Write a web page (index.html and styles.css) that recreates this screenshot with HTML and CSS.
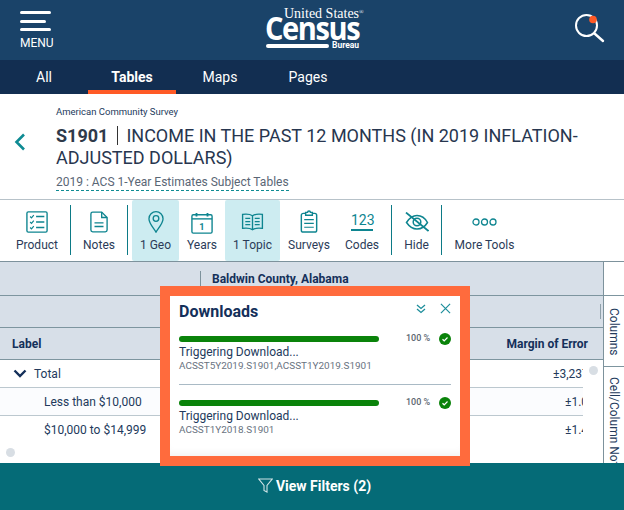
FILE: index.html
```html
<!DOCTYPE html>
<html lang="en">
<head>
<meta charset="utf-8">
<title>S1901 Income</title>
<link rel="stylesheet" href="styles.css">
</head>
<body>
<div class="page">
  <header class="topbar">
    <div class="menu">
      <span class="menu-lines"><i></i><i></i><i></i></span>
      <span class="menu-label">MENU</span>
    </div>
    <div class="logo">
      <span class="logo-us">United States<sup>®</sup></span>
      <span class="logo-census">Census</span>
      <span class="logo-foot"><i></i><b>Bureau</b></span>
    </div>
    <div class="search">
      <svg width="30" height="30" viewBox="0 0 30 30"><circle cx="11.500" cy="12.500" r="10.500" fill="none" stroke="#fff" stroke-width="2"/><path d="M19.500 20.500 L28 28" stroke="#fff" stroke-width="2.400" stroke-linecap="round"/><circle cx="18" cy="6.500" r="3.800" fill="#ff5a26"/></svg>
    </div>
  </header>
  <nav class="tabs">
    <a class="tab tab-all">All</a>
    <a class="tab tab-tables">Tables</a>
    <a class="tab tab-maps">Maps</a>
    <a class="tab tab-pages">Pages</a>
  </nav>
  <section class="title">
    <svg class="back" width="14" height="18" viewBox="0 0 14 18"><path d="M11 1.500 L3.500 9 L11 16.500" fill="none" stroke="#0e8b93" stroke-width="2.600"/></svg>
    <div class="title-text">
      <div class="survey">American Community Survey</div>
      <h1><b>S1901</b><span class="bar"></span>INCOME IN THE PAST 12 MONTHS (IN 2019 INFLATION-ADJUSTED DOLLARS)</h1>
      <span class="vintage">2019 : ACS 1-Year Estimates Subject Tables</span>
    </div>
  </section>
  <section class="tools">
    <div class="tool t-product">
      <svg width="22" height="22" viewBox="0 0 24 24" fill="none" stroke="#0e8590" stroke-width="1.500"><rect x="1" y="1" width="22" height="22" rx="1.500"/><path d="M4.500 6 l1.500 1.500 l2.500-3 M4.500 12 l1.500 1.500 l2.500-3 M4.500 18 l1.500 1.500 l2.500-3" stroke-width="1.300"/><path d="M11 6h9M11 12h9M11 18h9" stroke-width="1.500"/></svg>
      <span>Product</span>
    </div>
    <span class="sep"></span>
    <div class="tool t-notes">
      <svg width="18" height="22" viewBox="0 0 20 24" fill="none" stroke="#0e8590" stroke-width="1.500"><path d="M3 1h10l6 6v14a2 2 0 0 1-2 2H3a2 2 0 0 1-2-2V3a2 2 0 0 1 2-2z"/><path d="M13 1v6h6"/><path d="M5 13h10M5 17h10" stroke-width="1.500"/></svg>
      <span>Notes</span>
    </div>
    <span class="sep"></span>
    <div class="tool t-geo active">
      <svg width="16" height="22" viewBox="0 0 18 25" fill="none" stroke="#0e8590" stroke-width="1.500"><path d="M9 24 C6 19 1 14 1 8.800 a8 8 0 0 1 16 0 C17 14 12 19 9 24z"/><circle cx="9" cy="8.500" r="3.200"/></svg>
      <span>1 Geo</span>
    </div>
    <div class="tool t-years">
      <svg width="22" height="22" viewBox="0 0 24 24" fill="none" stroke="#0e8590" stroke-width="1.500"><rect x="1" y="3" width="22" height="20" rx="1.500"/><path d="M1 7.500h22" /><path d="M6 1v4M18 1v4" stroke-width="2"/><text x="12" y="19.500" text-anchor="middle" class="cal">1</text></svg>
      <span>Years</span>
    </div>
    <div class="tool t-topic active">
      <svg width="23" height="18" viewBox="0 0 24 20" fill="none" stroke="#0e8590" stroke-width="1.500"><path d="M12 3 C9 1 5 1 1 1.500 V17 C5 16.500 9 16.500 12 18.500 C15 16.500 19 16.500 23 17 V1.500 C19 1 15 1 12 3z"/><path d="M12 3v15.500"/><path d="M4 6h5.500M4 9.500h5.500M4 13h5.500M14.500 6H20M14.500 9.500H20M14.500 13H20" stroke-width="1.300"/></svg>
      <span>1 Topic</span>
    </div>
    <div class="tool t-surveys">
      <svg width="18" height="23" viewBox="0 0 18 24" fill="none" stroke="#0e8590" stroke-width="1.500"><path d="M5.500 3.500H3a2 2 0 0 0-2 2V21a2 2 0 0 0 2 2h12a2 2 0 0 0 2-2V5.500a2 2 0 0 0-2-2h-2.500"/><path d="M5.500 2.500h2a1.500 1.500 0 0 1 3 0h2v3h-7z"/><path d="M4 10h10M4 14h10M4 18h10" stroke-width="1.300"/></svg>
      <span>Surveys</span>
    </div>
    <div class="tool t-codes">
      <span class="codes-icon">123</span>
      <span>Codes</span>
    </div>
    <span class="sep"></span>
    <div class="tool t-hide">
      <svg width="24" height="20" viewBox="0 0 24 20" fill="none" stroke="#0e8590" stroke-width="1.500"><path d="M1.500 10.500 C5 5 9 3.500 12 3.500 C15 3.500 19.500 5 22.500 10.500 C19.500 15.500 15 17 12 17 C9 17 5 15.500 1.500 10.500z"/><circle cx="12" cy="10" r="3.800"/><path d="M1 .5 L23.500 19" stroke-width="1.700"/></svg>
      <span>Hide</span>
    </div>
    <span class="sep"></span>
    <div class="tool t-more">
      <svg width="25" height="8" viewBox="0 0 25 8" fill="none" stroke="#0e8590" stroke-width="1.300"><circle cx="4" cy="4" r="3"/><circle cx="12.500" cy="4" r="3"/><circle cx="21" cy="4" r="3"/></svg>
      <span>More Tools</span>
    </div>
  </section>
  <section class="table-wrap">
    <div class="table">
      <div class="row-head h1"><span class="county">Baldwin County, Alabama</span></div>
      <div class="row-head h2"><span class="h2-tick"></span></div>
      <div class="row-head h3"><span>Label</span><span class="moe">Margin of Error</span></div>
      <div class="row r-total"><span class="lab"><svg width="14" height="9" viewBox="0 0 14 9"><path d="M1.500 1.500 L7 7 L12.500 1.500" fill="none" stroke="#14305a" stroke-width="2.400"/></svg>Total</span><span class="val val-wide">±3,237</span></div>
      <div class="row r-alt"><span class="lab indent">Less than $10,000</span><span class="val">±1.0</span></div>
      <div class="row r-last"><span class="lab indent">$10,000 to $14,999</span><span class="val">±1.4</span></div>
      <span class="dot dot-l"></span>
      <span class="dot dot-r"></span>
    </div>
    <aside class="side">
      <div class="side-top"></div>
      <div class="side-tab st-cols"><span>Columns</span></div>
      <div class="side-tab st-notes"><span>Cell/Column Notes</span></div>
    </aside>
    <div class="modal">
      <div class="modal-inner">
        <div class="modal-head">
          <h2>Downloads</h2>
          <svg class="m-min" width="10" height="10" viewBox="0 0 10 10" fill="none" stroke="#1d8e9b" stroke-width="1.300"><path d="M1 1 L5 4.500 L9 1M1 5 L5 8.500 L9 5"/></svg>
          <svg class="m-close" width="11" height="11" viewBox="0 0 12 12" fill="none" stroke="#1d8e9b" stroke-width="1.300"><path d="M1 1 L11 11 M11 1 L1 11"/></svg>
        </div>
        <div class="dl">
          <div class="dl-top"><span class="progress"></span><span class="pct">100 %</span><svg class="ok" width="12" height="12" viewBox="0 0 12 12"><circle cx="6" cy="6" r="6" fill="#0a830a"/><path d="M3.500 6.200 L5.200 7.800 L8.500 4.500" fill="none" stroke="#fff" stroke-width="1.200"/></svg></div>
          <div class="dl-msg">Triggering Download...</div>
          <div class="dl-id">ACSST5Y2019.S1901,ACSST1Y2019.S1901</div>
        </div>
        <div class="dl dl-second">
          <div class="dl-top"><span class="progress"></span><span class="pct">100 %</span><svg class="ok" width="12" height="12" viewBox="0 0 12 12"><circle cx="6" cy="6" r="6" fill="#0a830a"/><path d="M3.500 6.200 L5.200 7.800 L8.500 4.500" fill="none" stroke="#fff" stroke-width="1.200"/></svg></div>
          <div class="dl-msg">Triggering Download...</div>
          <div class="dl-id">ACSST1Y2018.S1901</div>
        </div>
      </div>
    </div>
  </section>
  <footer class="filters">
    <svg width="15" height="15" viewBox="0 0 15 15" fill="none" stroke="#cfe3e6" stroke-width="1.100"><path d="M.8 1h13.400L9 7.500V14L6 12.500v-5z"/></svg>
    <span>View Filters (2)</span>
  </footer>
</div>
</body>
</html>
```
FILE: styles.css
```css
* { box-sizing: border-box; }
html, body { margin: 0; padding: 0; }
body { font-family: Roboto, "Liberation Sans", sans-serif; color: #14305a; background: #fff; }
.page { width: 624px; height: 510px; overflow: hidden; display: flex; flex-direction: column; }

.topbar { height: 60px; background: #1a4369; display: flex; position: relative; justify-content: center; flex: none; }
.menu { position: absolute; left: 20px; top: 11px; display: flex; flex-direction: column; color: #fff; }
.menu-lines { display: flex; flex-direction: column; gap: 5.500px; width: 31px; }
.menu-lines i { display: block; height: 3px; background: #fff; border-radius: 2px; }
.menu-lines i:nth-child(2) { width: 26px; }
.menu-label { font-size: 12px; margin-top: 5px; line-height: 14px; }
.logo { width: 100px; color: #fff; position: relative; height: 60px; }
.logo-us { position: absolute; left: 22px; top: 6px; font: 14px/15px "Liberation Serif", serif; white-space: nowrap; }
.logo-us sup { font-size: 6px; vertical-align: top; position: relative; top: -1px; }
.logo-census { position: absolute; left: 3px; top: 8px; font: bold 33px/40px "Open Sans", "Liberation Sans", sans-serif; letter-spacing: -1.600px; transform: scaleX(.88); transform-origin: left; }
.logo-foot { position: absolute; left: 4px; top: 41px; display: flex; align-items: center; gap: 3px; white-space: nowrap; }
.logo-foot i { display: block; width: 63px; height: 4px; background: #fff; border-radius: 2px; }
.logo-foot b { font: bold 8.500px/9px Roboto, sans-serif; }
.search { position: absolute; left: 575px; top: 13px; line-height: 0; }

.tabs { height: 34px; background: #122e51; display: flex; flex: none; color: #fff; font-size: 14px; }
.tab { display: flex; align-items: center; justify-content: center; height: 34px; padding-bottom: 1px; width: 88px; }
.tab-tables { font-weight: 700; border-bottom: 4px solid #ff5a26; padding-top: 3px; padding-bottom: 0; }

.title { height: 106px; flex: none; display: flex; border-bottom: 1px solid #b7c2c9; position: relative; }
.back { position: absolute; left: 13px; top: 39px; }
.title-text { padding: 11px 20px 0 56px; }
.survey { font-size: 9.500px; line-height: 14px; color: #233a5c; }
h1 { margin: 6px 0 0; font-size: 18px; line-height: 22px; font-weight: 400; color: #27364f; }
h1 b { font-weight: 700; color: #2f3a4a; }
.bar { display: inline-block; width: 1px; height: 19px; background: #333; margin: 0 8px 0 9px; vertical-align: -3px; }
.vintage { display: inline-block; font-size: 12px; line-height: 15px; margin-top: 6px; color: #5a6675; border-bottom: 1px dashed #0e8b93; }

.tools { height: 62px; flex: none; display: flex; align-items: flex-start; border-bottom: 1px solid #7d929c; position: relative; }
.tool { position: relative; height: 61px; display: flex; flex-direction: column; align-items: center; font-size: 12px; color: #2b3b58; padding-top: 11px; border-radius: 2px; }
.tool svg { flex: none; }
.tool > span:last-child { position: absolute; top: 38px; line-height: 14px; white-space: nowrap; }
.tool.active { background: #cdecf1; }
.sep { width: 1px; height: 50px; background: #0c7a86; margin-top: 5px; flex: none; }
.t-product { width: 70px; padding-left: 4px; }
.t-product > span:last-child { left: 16px; }
.t-notes { width: 56px; }
.t-geo { width: 47px; margin-left: 4px; }
.t-years { width: 46px; padding-top: 12px; }
.t-topic { width: 55px; padding-top: 13px; }
.t-surveys { width: 58px; padding-top: 10px; }
.t-codes { width: 48px; margin-right: 5px; }
.t-hide { width: 49px; padding-top: 12px; }
.t-more { width: 85px; padding-top: 18px; }
.cal { font: bold 10px Roboto, sans-serif; fill: #0e8590; stroke: none; }
.codes-icon { font-size: 14px; line-height: 15px; color: #0e8590; border-bottom: 2px solid #0e8590; padding: 0; margin-top: 2px; height: 18px; width: 22px; text-align: center; }

.table-wrap { height: 201px; flex: none; display: flex; position: relative; }
.table { width: 603px; position: relative; overflow: hidden; }
.row-head { background: #d7dfe8; border-bottom: 1px solid #7d959f; font-size: 12px; font-weight: 700; color: #14305a; }
.h1 { height: 34px; padding: 9px 0 0 200px; }
.county { display: block; border-left: 1px solid #7d929c; padding: 1px 0 0 11px; height: 24px; line-height: 14px; }
.h2 { height: 32px; position: relative; }
.h2-tick { position: absolute; left: 600px; top: 8px; width: 1px; height: 15px; background: #8fa0aa; }
.h3 { height: 32px; display: flex; justify-content: space-between; align-items: center; padding: 0 15px 0 12px; }
.row { height: 28px; display: flex; justify-content: space-between; align-items: center; font-size: 12px; color: #233a5c; width: 583px; border-bottom: 1px solid #bcc8cf; }
.r-alt { background: #fbfcfe; }
.r-last { border-bottom: 0; }
.lab { display: flex; align-items: center; gap: 7px; padding-left: 13px; }
.indent { padding-left: 44px; }
.val { width: 18px; white-space: nowrap; overflow: hidden; text-align: left; }
.val-wide { width: 30px; }
.dot { position: absolute; width: 9px; height: 9px; border-radius: 50%; background: #d8dee4; }
.dot-l { left: 6px; top: 186px; }
.dot-r { left: 589px; top: 104px; }

.side { width: 21px; border-left: 1px solid #7d929c; flex: none; overflow: hidden; display: flex; flex-direction: column; }
.side-top { height: 34px; border-bottom: 1px solid #7d959f; flex: none; }
.side-tab { writing-mode: vertical-rl; font-size: 12px; color: #233a5c; display: flex; align-items: center; white-space: nowrap; flex: none; }
.st-cols { height: 71px; border-bottom: 1px solid #7d959f; padding-top: 12px; }
.st-notes { height: 96px; padding-top: 10px; }

.modal { position: absolute; left: 160px; top: 24px; width: 310px; height: 180px; background: #ff6b3d; padding: 10px; }
.modal-inner { background: #fff; height: 160px; padding: 0 9px; box-shadow: inset 0 -8px 8px -6px #f0f0f0; }
.modal-head { height: 36px; position: relative; }
.modal-head h2 { margin: 0; padding-top: 6px; font-size: 16px; line-height: 20px; font-weight: 700; color: #14305a; }
.m-min { position: absolute; left: 237px; top: 8px; }
.m-close { position: absolute; left: 261px; top: 7px; }
.dl { position: relative; }
.dl-top { height: 13px; display: flex; align-items: center; }
.progress { display: block; width: 200px; height: 6px; background: #0a830a; border-radius: 3px; }
.pct { font-size: 9px; font-weight: 500; color: #5c6670; margin-left: 27px; margin-top: -1px; width: 33px; }
.ok { margin-left: 0; margin-top: 1px; }
.dl-msg { font-size: 12px; line-height: 14px; color: #233a5c; }
.dl-id { font-size: 9.950px; line-height: 12px; margin-top: 1px; color: #69737f; }
.dl-second { margin-top: 12px; border-top: 1px solid #a9bac5; padding-top: 11px; }

.filters { height: 47px; flex: none; background: #056b77; color: #fff; display: flex; align-items: center; justify-content: center; gap: 3px; font-size: 14px; font-weight: 700; padding: 0 0 2px 5px; }
```
